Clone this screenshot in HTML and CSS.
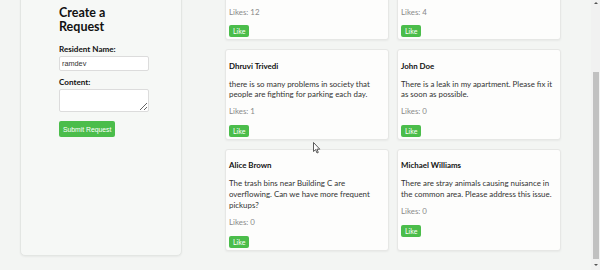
FILE: index.html
```html
<!DOCTYPE html>
<html>
<head>
<meta charset="utf-8">
<link rel="stylesheet" href="styles.css">
</head>
<body>
<div class="page">
  <aside class="panel">
    <h2 class="panel-title">Create a Request</h2>
    <form class="form">
      <label class="label">Resident Name:</label>
      <input class="input" type="text" value="ramdev">
      <label class="label label-content">Content:</label>
      <textarea class="textarea"></textarea>
      <button class="submit" type="button">Submit Request</button>
    </form>
  </aside>
  <main class="grid">
    <div class="card card-top">
      <p class="likes">Likes: 12</p>
      <button class="like" type="button">Like</button>
    </div>
    <div class="card card-top">
      <p class="likes">Likes: 4</p>
      <button class="like" type="button">Like</button>
    </div>
    <div class="card">
      <h3 class="name">Dhruvi Trivedi</h3>
      <p class="text">there is so many problems in society that people are fighting for parking each day.</p>
      <p class="likes">Likes: 1</p>
      <button class="like" type="button">Like</button>
    </div>
    <div class="card">
      <h3 class="name">John Doe</h3>
      <p class="text">There is a leak in my apartment. Please fix it as soon as possible.</p>
      <p class="likes">Likes: 0</p>
      <button class="like" type="button">Like</button>
    </div>
    <div class="card">
      <h3 class="name">Alice Brown</h3>
      <p class="text">The trash bins near Building C are overflowing. Can we have more frequent pickups?</p>
      <p class="likes">Likes: 0</p>
      <button class="like" type="button">Like</button>
    </div>
    <div class="card">
      <h3 class="name">Michael Williams</h3>
      <p class="text">There are stray animals causing nuisance in the common area. Please address this issue.</p>
      <p class="likes">Likes: 0</p>
      <button class="like" type="button">Like</button>
    </div>
  </main>
</div>
<div class="scrollbar">
  <div class="sb-up"></div>
  <div class="sb-thumb"></div>
  <div class="sb-down"></div>
</div>
<svg class="cursor" width="8" height="12" viewBox="0 0 8 12">
  <path d="M0.5 0.5 L0.5 9.5 L2.6 7.6 L4 11 L5.3 10.4 L3.9 7.2 L6.8 7.2 Z" fill="#fff" stroke="#333" stroke-width="0.8" stroke-linejoin="round"/>
</svg>
</body>
</html>
```
FILE: styles.css
```css
html, body {
  margin: 0;
  height: 100%;
  overflow: hidden;
  background: #f3f5f3;
  font-family: Lato, "Noto Sans", sans-serif;
}

.page {
  display: flex;
  align-items: flex-start;
  gap: 43px;
  padding-left: 20px;
  margin-top: -51px;
}

.panel {
  box-sizing: border-box;
  width: 162px;
  height: 307px;
  padding: 55.5px 32px 0 38px;
  background: #f6f8f6;
  border: 1px solid #e3e6e3;
  border-radius: 5px;
  box-shadow: 0 1px 2px rgba(0, 0, 0, 0.05);
}

.panel-title {
  margin: 0 0 10px;
  font-size: 12.5px;
  line-height: 14px;
  font-weight: 700;
  color: #111;
}

.form {
  display: flex;
  flex-direction: column;
  align-items: flex-start;
  width: 90px;
}

.label {
  font-size: 8.1px;
  line-height: 11px;
  font-weight: 700;
  color: #111;
  margin-bottom: 1.5px;
}

.label-content {
  margin-top: 5.5px;
}

.input {
  box-sizing: border-box;
  width: 90px;
  height: 15px;
  margin: 0;
  padding: 0 2px;
  border: 1px solid #dcdcdc;
  border-radius: 2px;
  background: #fff;
  font-family: "Liberation Sans", Arial, sans-serif;
  font-size: 7.3px;
  color: #333;
}

.textarea {
  box-sizing: border-box;
  width: 90px;
  height: 23px;
  margin: 0;
  padding: 2px;
  border: 1px solid #dcdcdc;
  border-radius: 2px;
  background: #fff;
  font-size: 7px;
}

.submit {
  margin-top: 9px;
  height: 16px;
  padding: 0 4px;
  border: none;
  border-radius: 2px;
  background: #4bbd4b;
  color: #fff;
  font-family: "Liberation Sans", Arial, sans-serif;
  font-size: 6.8px;
}

.grid {
  display: grid;
  grid-template-columns: 164px 164px;
  column-gap: 8px;
  row-gap: 9px;
}

.card {
  box-sizing: border-box;
  padding: 10.5px 3px 2px;
  background: #fdfdfc;
  border: 1px solid #e6e7e5;
  border-radius: 3px;
  box-shadow: 0 1px 2px rgba(0, 0, 0, 0.05);
  display: flex;
  flex-direction: column;
  align-items: flex-start;
}

.card-top {
  height: 91px;
  justify-content: flex-end;
}

.name {
  margin: 0 0 7px;
  font-size: 7.9px;
  line-height: 11px;
  font-weight: 700;
  color: #111;
}

.text {
  margin: 0 0 6.8px;
  font-size: 7.9px;
  line-height: 10.6px;
  color: #333;
}

.likes {
  margin: 0 0 7.5px;
  font-size: 7.9px;
  line-height: 11px;
  color: #8a8a8a;
}

.like {
  height: 12px;
  padding: 0 4px;
  border: none;
  border-radius: 2px;
  background: #4bbd4b;
  color: #fff;
  font-family: Lato, sans-serif;
  font-size: 7px;
}

.scrollbar {
  position: fixed;
  top: 0;
  right: 0;
  width: 9px;
  height: 270px;
  background: #f1f1f1;
  display: flex;
  flex-direction: column;
  align-items: center;
}

.sb-up {
  margin-top: 2px;
  width: 0;
  height: 0;
  border-left: 2px solid transparent;
  border-right: 2px solid transparent;
  border-bottom: 2.5px solid #555;
}

.sb-thumb {
  margin-top: 68px;
  width: 6px;
  height: 187px;
  background: #c1c1c1;
}

.sb-down {
  margin-top: 5px;
  width: 0;
  height: 0;
  border-left: 2px solid transparent;
  border-right: 2px solid transparent;
  border-top: 2.5px solid #555;
}

.cursor {
  position: fixed;
  left: 313px;
  top: 142px;
}
```
